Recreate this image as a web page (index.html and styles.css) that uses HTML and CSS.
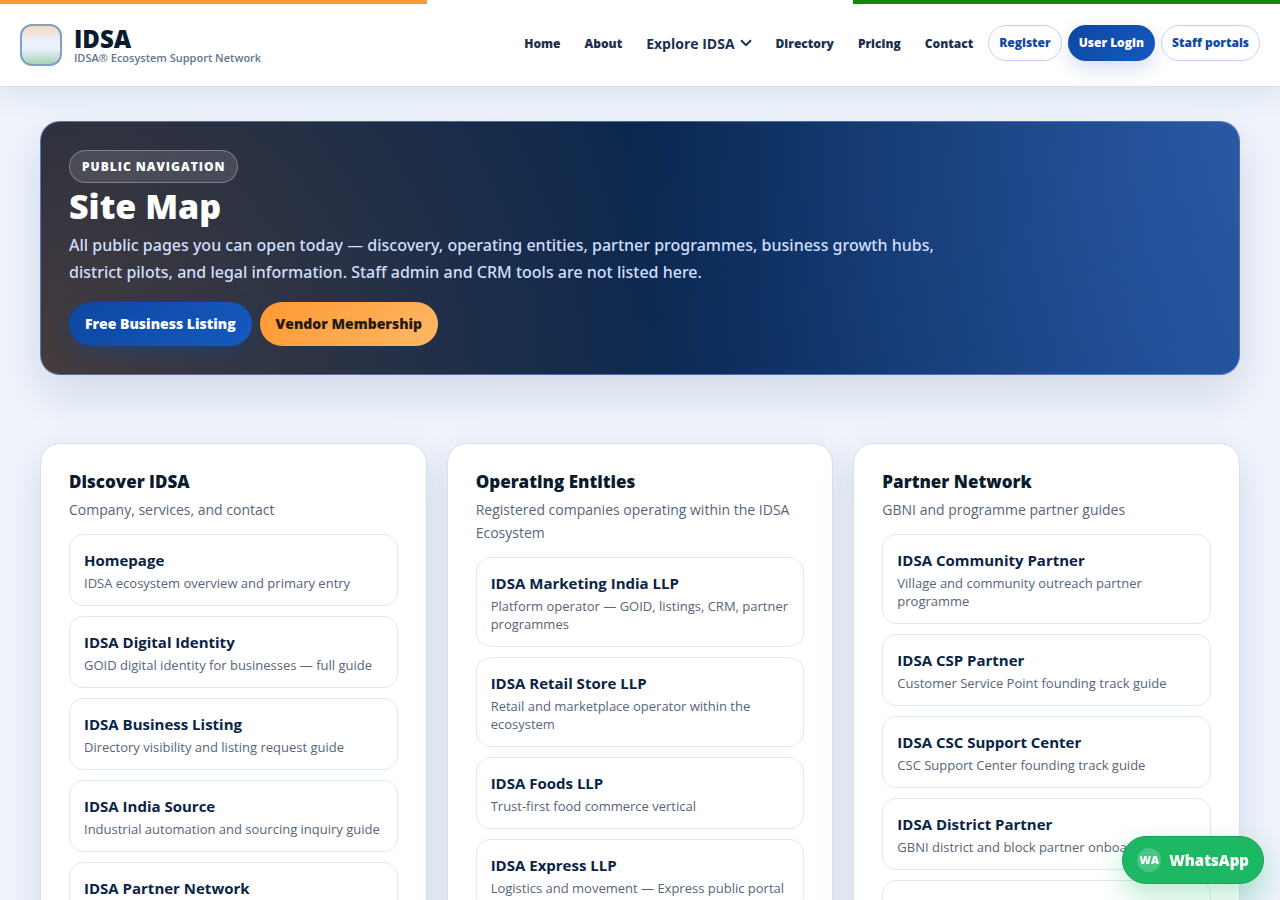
FILE: index.html
```html
<!DOCTYPE html>
<html lang="en">
<head>
    <meta charset="UTF-8">
    <meta name="viewport" content="width=device-width, initial-scale=1.0">
    <title>Site Map | IDSA</title>
    <link rel="stylesheet" href="styles.css">
</head>
<body>
    <header class="site-header">
        <div class="tricolor"></div>
        <div class="header-inner">
            <a class="brand" href="#">
                <span class="brand-mark"></span>
                <span class="brand-text">
                    <strong>IDSA</strong>
                    <small>IDSA® Ecosystem Support Network</small>
                </span>
            </a>
            <nav class="main-nav">
                <a href="#">Home</a>
                <a href="#">About</a>
                <button type="button" class="nav-toggle">Explore IDSA
                    <svg width="12" height="8" viewBox="0 0 12 8" fill="none" stroke="currentColor" stroke-width="2"><path d="M1 1.2 6 6.2 11 1.2"/></svg>
                </button>
                <a href="#">Directory</a>
                <a href="#">Pricing</a>
                <a href="#">Contact</a>
            </nav>
            <div class="header-actions">
                <a class="pill" href="#">Register</a>
                <a class="pill pill-primary" href="#">User Login</a>
                <a class="pill" href="#">Staff portals</a>
            </div>
        </div>
    </header>

    <main class="page">
        <section class="hero">
            <span class="tag">PUBLIC NAVIGATION</span>
            <h1>Site Map</h1>
            <p>All public pages you can open today — discovery, operating entities, partner programmes, business growth hubs, district pilots, and legal information. Staff admin and CRM tools are not listed here.</p>
            <div class="hero-actions">
                <a class="btn btn-blue" href="#">Free Business Listing</a>
                <a class="btn btn-orange" href="#">Vendor Membership</a>
            </div>
        </section>

        <section class="sitemap">
            <article class="card">
                <h2>Discover IDSA</h2>
                <p class="card-intro">Company, services, and contact</p>
                <div class="links">
                    <a href="#"><strong>Homepage</strong><span>IDSA ecosystem overview and primary entry</span></a>
                    <a href="#"><strong>IDSA Digital Identity</strong><span>GOID digital identity for businesses — full guide</span></a>
                    <a href="#"><strong>IDSA Business Listing</strong><span>Directory visibility and listing request guide</span></a>
                    <a href="#"><strong>IDSA India Source</strong><span>Industrial automation and sourcing inquiry guide</span></a>
                    <a href="#"><strong>IDSA Partner Network</strong></a>
                </div>
            </article>
            <article class="card">
                <h2>Operating Entities</h2>
                <p class="card-intro">Registered companies operating within the IDSA Ecosystem</p>
                <div class="links">
                    <a href="#"><strong>IDSA Marketing India LLP</strong><span>Platform operator — GOID, listings, CRM, partner programmes</span></a>
                    <a href="#"><strong>IDSA Retail Store LLP</strong><span>Retail and marketplace operator within the ecosystem</span></a>
                    <a href="#"><strong>IDSA Foods LLP</strong><span>Trust-first food commerce vertical</span></a>
                    <a href="#"><strong>IDSA Express LLP</strong><span>Logistics and movement — Express public portal</span></a>
                </div>
            </article>
            <article class="card">
                <h2>Partner Network</h2>
                <p class="card-intro">GBNI and programme partner guides</p>
                <div class="links">
                    <a href="#"><strong>IDSA Community Partner</strong><span>Village and community outreach partner programme</span></a>
                    <a href="#"><strong>IDSA CSP Partner</strong><span>Customer Service Point founding track guide</span></a>
                    <a href="#"><strong>IDSA CSC Support Center</strong><span>CSC Support Center founding track guide</span></a>
                    <a href="#"><strong>IDSA District Partner</strong><span>GBNI district and block partner onboarding</span></a>
                    <a href="#"><strong>IDSA Block Partner</strong></a>
                </div>
            </article>
        </section>
    </main>

    <a class="whatsapp" href="#"><span class="wa-badge">WA</span>WhatsApp</a>
</body>
</html>
```
FILE: styles.css
```css
* {
    box-sizing: border-box;
}
body {
    margin: 0;
    font-family: "Open Sans", "Noto Sans", sans-serif;
    font-size: 16px;
    color: #0b1b2e;
    background: #eef3fc;
}
a {
    color: inherit;
    text-decoration: none;
}
.site-header {
    position: sticky;
    top: 0;
    z-index: 10;
    background: #fff;
    border-bottom: 1px solid #d8e0ee;
    box-shadow: 0 8px 28px rgba(15, 35, 80, 0.08);
}
.tricolor {
    height: 4px;
    background: linear-gradient(90deg, #ff9933 33.33%, #fff 33.33% 66.66%, #138808 66.66%);
}
.header-inner {
    display: flex;
    align-items: center;
    height: 82px;
    padding: 0 20px;
}
.brand {
    display: flex;
    align-items: center;
    gap: 12px;
    margin-right: auto;
}
.brand-mark {
    width: 42px;
    height: 42px;
    border: 2px solid #7fa0c4;
    border-radius: 12px;
    background: linear-gradient(180deg, #f8d8bb, #eaf1ff 40%, #eaf1ff 60%, #a9d3b0);
}
.brand-text {
    padding-top: 4px;
}
.brand-text strong {
    display: block;
    font-size: 24px;
    font-weight: 800;
    line-height: 22px;
}
.brand-text small {
    display: block;
    font-size: 11px;
    font-weight: 600;
    line-height: 16px;
    color: #64748b;
}
.main-nav {
    display: flex;
    align-items: center;
    gap: 24px;
    margin-right: 15px;
    padding-bottom: 4px;
    font-size: 12px;
    font-weight: 800;
    color: #1c2f50;
}
.nav-toggle {
    display: flex;
    align-items: center;
    gap: 5px;
    padding: 0;
    border: 0;
    background: none;
    font: inherit;
    font-size: 14px;
    font-weight: 700;
    color: inherit;
}
.header-actions {
    display: flex;
    gap: 6px;
    padding-bottom: 4px;
}
.pill {
    padding: 0 10px;
    border: 1px solid #bfd2f7;
    border-radius: 18px;
    font-size: 12px;
    font-weight: 800;
    line-height: 34px;
    color: #0f4aa5;
    background: #fff;
}
.pill-primary {
    border-color: transparent;
    color: #fff;
    background: linear-gradient(135deg, #0d47a1, #1559c0) border-box;
    box-shadow: 0 8px 20px rgba(13, 71, 161, 0.16);
}
.page {
    padding: 34px 40px;
}
.hero {
    padding: 28px;
    border: 1px solid rgba(110, 150, 220, 0.6);
    border-radius: 20px;
    color: #fff;
    background:
        radial-gradient(circle at 0 100%, rgba(255, 153, 51, 0.24), transparent 55%),
        radial-gradient(circle at 100% 0, rgba(90, 140, 230, 0.22), transparent 50%),
        linear-gradient(95deg, #0b1f40, #08264f 50%, #1c4c96);
    box-shadow: 0 18px 44px rgba(15, 35, 80, 0.12);
}
.tag {
    display: inline-block;
    padding: 0 12px;
    border: 1px solid rgba(255, 255, 255, 0.3);
    border-radius: 17px;
    font-size: 12px;
    font-weight: 800;
    line-height: 31px;
    letter-spacing: 1px;
    vertical-align: top;
    background: rgba(255, 255, 255, 0.12);
}
.hero h1 {
    margin: 3px 0 6px;
    font-size: 34px;
    font-weight: 800;
    line-height: 40px;
}
.hero p {
    max-width: 890px;
    margin: 0 0 16px;
    font-family: "Noto Sans", sans-serif;
    font-size: 16px;
    font-weight: 500;
    line-height: 27px;
    color: #cfdffb;
}
.hero-actions {
    display: flex;
    gap: 8px;
}
.btn {
    padding: 0 16px;
    border-radius: 22px;
    font-size: 14px;
    font-weight: 800;
    line-height: 44px;
}
.btn-blue {
    background: linear-gradient(135deg, #0d47a1, #1559c0);
    box-shadow: 0 8px 20px rgba(13, 71, 161, 0.3);
}
.btn-orange {
    color: #231a10;
    background: linear-gradient(135deg, #ff9933, #ffb765);
}
.sitemap {
    display: grid;
    grid-template-columns: repeat(3, 1fr);
    gap: 20px;
    margin-top: 68px;
}
.card {
    padding: 27px 28px;
    border: 1px solid #d8e0ee;
    border-radius: 20px;
    background: #fff;
    box-shadow: 0 14px 40px rgba(15, 35, 80, 0.1);
}
.card h2 {
    margin: 0;
    font-size: 17px;
    font-weight: 800;
    line-height: 22px;
}
.card-intro {
    margin: 5px 0 13px;
    font-size: 14px;
    line-height: 23px;
    color: #566579;
}
.links {
    display: grid;
    gap: 10px;
}
.links a {
    padding: 13px 14px;
    border: 1px solid #e2e8f0;
    border-radius: 14px;
}
.links strong {
    display: block;
    font-size: 15px;
    font-weight: 700;
    line-height: 24px;
    color: #0a2346;
}
.links span {
    display: block;
    margin-top: 2px;
    font-size: 13px;
    line-height: 18px;
    color: #566579;
}
.whatsapp {
    position: fixed;
    right: 16px;
    bottom: 16px;
    z-index: 20;
    display: flex;
    align-items: center;
    gap: 8px;
    height: 48px;
    padding: 0 14px;
    border: 1px solid #16a356;
    border-radius: 24px;
    font-size: 15px;
    font-weight: 800;
    color: #fff;
    background: #1cb864;
    box-shadow: 0 12px 28px rgba(28, 184, 100, 0.3);
}
.wa-badge {
    width: 24px;
    border-radius: 50%;
    font-size: 11px;
    line-height: 24px;
    text-align: center;
    background: rgba(255, 255, 255, 0.2);
}
```
